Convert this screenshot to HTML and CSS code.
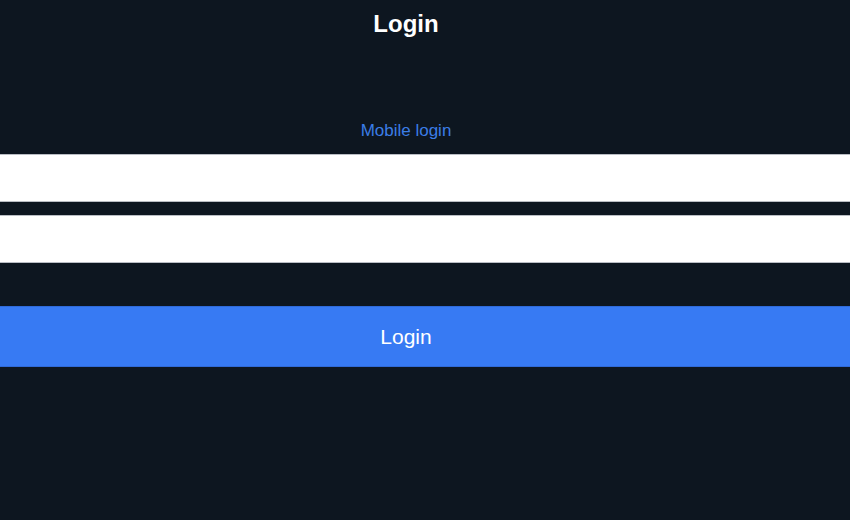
FILE: index.html
```html
<!DOCTYPE html>
<html lang="en">
<head>
<meta charset="utf-8">
<title>Login</title>
<link rel="stylesheet" href="styles.css">
</head>
<body>
<main class="page">
  <h1 class="title">Login</h1>
  <div class="switch"><a class="switch-link" href="#">Mobile login</a></div>
  <form class="form" onsubmit="return false">
    <input class="field" type="text" aria-label="Username">
    <input class="field" type="password" aria-label="Password">
    <button class="submit" type="submit">Login</button>
  </form>
</main>
</body>
</html>
```

FILE: styles.css
```css
html, body {
  margin: 0;
  padding: 0;
  background: #0d1620;
  height: 100%;
}
body {
  font-family: "Liberation Sans", Arial, Helvetica, sans-serif;
  color: #ffffff;
}
.page {
  display: flex;
  flex-direction: column;
}
.title {
  margin: 10px 0 0;
  padding-right: 38px;
  font-size: 24px;
  line-height: 28px;
  font-weight: 700;
  text-align: center;
  color: #ffffff;
}
.switch {
  margin: 83px 0 13px;
  padding-right: 38px;
  text-align: center;
  font-size: 17px;
  line-height: 20px;
}
.switch-link {
  color: #3b7de6;
  text-decoration: none;
}
.form {
  display: flex;
  flex-direction: column;
  margin: 0;
}
.field {
  display: block;
  box-sizing: border-box;
  width: 100%;
  height: 48px;
  margin: 0 0 13px;
  padding: 0 12px;
  border: none;
  border-top: 1px solid #b9bdc4;
  border-bottom: 1px solid #b9bdc4;
  background: #ffffff;
  font-family: inherit;
  font-size: 16px;
  outline: none;
}
.field + .field {
  margin-bottom: 43px;
}
.submit {
  display: block;
  box-sizing: border-box;
  width: 100%;
  height: 61px;
  margin: 0;
  padding: 0 38px 0 0;
  border: none;
  border-top: 1px solid #2f6ad8;
  border-bottom: 1px solid #2f6ad8;
  background: #377af3;
  color: #ffffff;
  font-family: inherit;
  font-size: 21px;
  line-height: 24px;
  text-align: center;
  cursor: pointer;
}
```
